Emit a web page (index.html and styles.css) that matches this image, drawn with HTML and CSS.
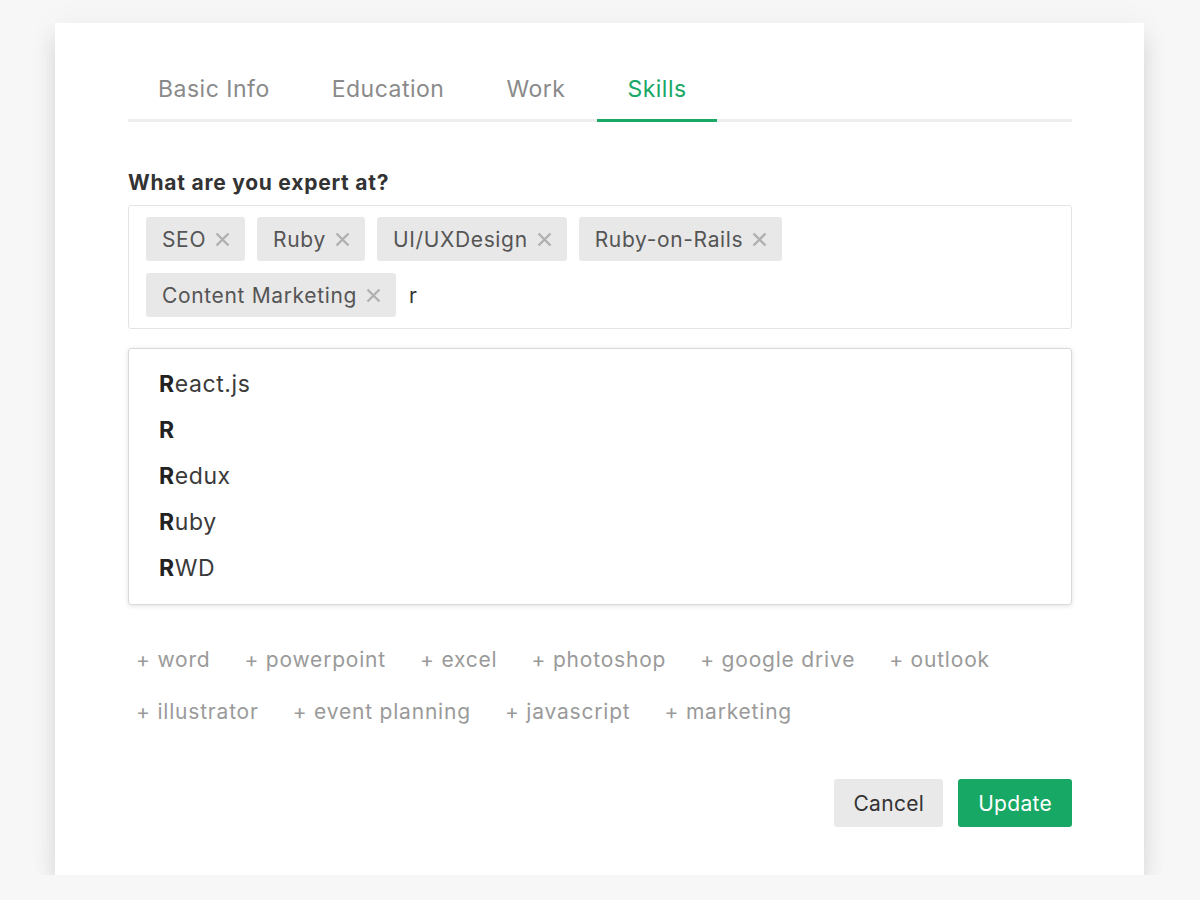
FILE: index.html
```html
<!DOCTYPE html>
<html lang="en">
<head>
<meta charset="utf-8">
<title>Edit profile – Skills</title>
<link rel="stylesheet" href="styles.css">
</head>
<body>
<div class="card">
  <nav class="tabs">
    <a class="tab">Basic Info</a>
    <a class="tab">Education</a>
    <a class="tab">Work</a>
    <a class="tab active">Skills</a>
  </nav>

  <label class="field-label">What are you expert at?</label>
  <div class="tag-input">
    <div class="tag-row">
      <span class="chip">SEO <svg class="chip-x" viewBox="0 0 15 15"><path d="M1.5 1.5 L13.5 13.5 M13.5 1.5 L1.5 13.5"/></svg></span>
      <span class="chip">Ruby <svg class="chip-x" viewBox="0 0 15 15"><path d="M1.5 1.5 L13.5 13.5 M13.5 1.5 L1.5 13.5"/></svg></span>
      <span class="chip">UI/UXDesign <svg class="chip-x" viewBox="0 0 15 15"><path d="M1.5 1.5 L13.5 13.5 M13.5 1.5 L1.5 13.5"/></svg></span>
      <span class="chip">Ruby-on-Rails <svg class="chip-x" viewBox="0 0 15 15"><path d="M1.5 1.5 L13.5 13.5 M13.5 1.5 L1.5 13.5"/></svg></span>
    </div>
    <div class="tag-row">
      <span class="chip">Content Marketing <svg class="chip-x" viewBox="0 0 15 15"><path d="M1.5 1.5 L13.5 13.5 M13.5 1.5 L1.5 13.5"/></svg></span>
      <span class="typed">r</span>
    </div>
  </div>

  <ul class="dropdown">
    <li><b>R</b>eact.js</li>
    <li><b>R</b></li>
    <li><b>R</b>edux</li>
    <li><b>R</b>uby</li>
    <li><b>R</b>WD</li>
  </ul>

  <div class="suggestions">
    <div class="sugg-row">
      <span class="sugg">+ word</span>
      <span class="sugg">+ powerpoint</span>
      <span class="sugg">+ excel</span>
      <span class="sugg">+ photoshop</span>
      <span class="sugg">+ google drive</span>
      <span class="sugg">+ outlook</span>
    </div>
    <div class="sugg-row">
      <span class="sugg">+ illustrator</span>
      <span class="sugg">+ event planning</span>
      <span class="sugg">+ javascript</span>
      <span class="sugg">+ marketing</span>
    </div>
  </div>

  <div class="actions">
    <button class="btn btn-cancel">Cancel</button>
    <button class="btn btn-update">Update</button>
  </div>
</div>
</body>
</html>
```

FILE: styles.css
```css
html, body {
  margin: 0;
  padding: 0;
}

body {
  background: #f7f7f7;
  font-family: Inter, "Noto Sans", sans-serif;
  color: #333;
  padding-top: 23px;
}

.card {
  margin-left: 55px;
  width: 1089px;
  box-sizing: border-box;
  background: #fff;
  padding: 50px 72px 48px 73px;
  box-shadow: 0 14px 20px rgba(0, 0, 0, 0.12), 0 0 36px rgba(0, 0, 0, 0.035);
}

/* tab bar */
.tabs {
  display: flex;
  border-bottom: 3px solid #eeeeee;
}

.tab {
  font-size: 23px;
  line-height: 32px;
  letter-spacing: 0.5px;
  padding: 0 30px 14px;
  margin-right: 2px;
  margin-bottom: -3px;
  color: #8a8a8a;
  border-bottom: 3px solid transparent;
  cursor: pointer;
}

.tab.active {
  color: #19a865;
  border-bottom-color: #19a865;
}

/* tag field */
.field-label {
  display: block;
  margin-top: 47px;
  font-size: 21px;
  line-height: 28px;
  font-weight: 700;
  color: #333;
  letter-spacing: 0.75px;
}

.tag-input {
  margin-top: 8px;
  border: 1px solid #e4e4e4;
  border-radius: 3px;
  padding: 11px 17px;
  display: flex;
  flex-direction: column;
  gap: 12px;
}

.tag-row {
  display: flex;
  align-items: center;
  gap: 12px;
}

.chip {
  display: inline-flex;
  align-items: center;
  height: 44px;
  box-sizing: border-box;
  padding: 0 15px 0 16px;
  background: #e8e8e8;
  border-radius: 3px;
  font-size: 21px;
  letter-spacing: 0.65px;
  color: #555;
  gap: 9px;
}

.chip-x {
  width: 15px;
  height: 15px;
  fill: none;
  stroke: #b0b0b0;
  stroke-width: 2.4;
}

.typed {
  font-size: 21px;
  color: #333;
  margin-left: 1px;
}

/* autocomplete list */
.dropdown {
  list-style: none;
  margin: 19px 0 0;
  padding: 12px 0 13px;
  border: 1px solid #d9d9d9;
  border-radius: 3px;
  box-shadow: 0 1px 5px rgba(0, 0, 0, 0.12);
}

.dropdown li {
  padding-left: 30px;
  font-size: 23px;
  letter-spacing: 0.6px;
  line-height: 46px;
  color: #3a3a3a;
}

.dropdown b {
  font-weight: 700;
  color: #222;
}

/* quick-add suggestions */
.suggestions {
  margin-top: 29px;
}

.sugg-row {
  display: flex;
  gap: 34px;
  padding-left: 8px;
}

.sugg {
  font-size: 21px;
  letter-spacing: 0.8px;
  line-height: 52px;
  color: #9a9a9a;
  cursor: pointer;
}

/* footer buttons */
.actions {
  margin-top: 41px;
  display: flex;
  justify-content: flex-end;
  gap: 15px;
}

.btn {
  height: 48px;
  border: none;
  border-radius: 3px;
  font-family: inherit;
  font-size: 21px;
  letter-spacing: 0.3px;
  padding: 0 19px;
  cursor: pointer;
}

.btn-cancel {
  background: #e9e9e9;
  color: #333;
}

.btn-update {
  background: #17a865;
  color: #fff;
  padding: 0 20px;
}
```
